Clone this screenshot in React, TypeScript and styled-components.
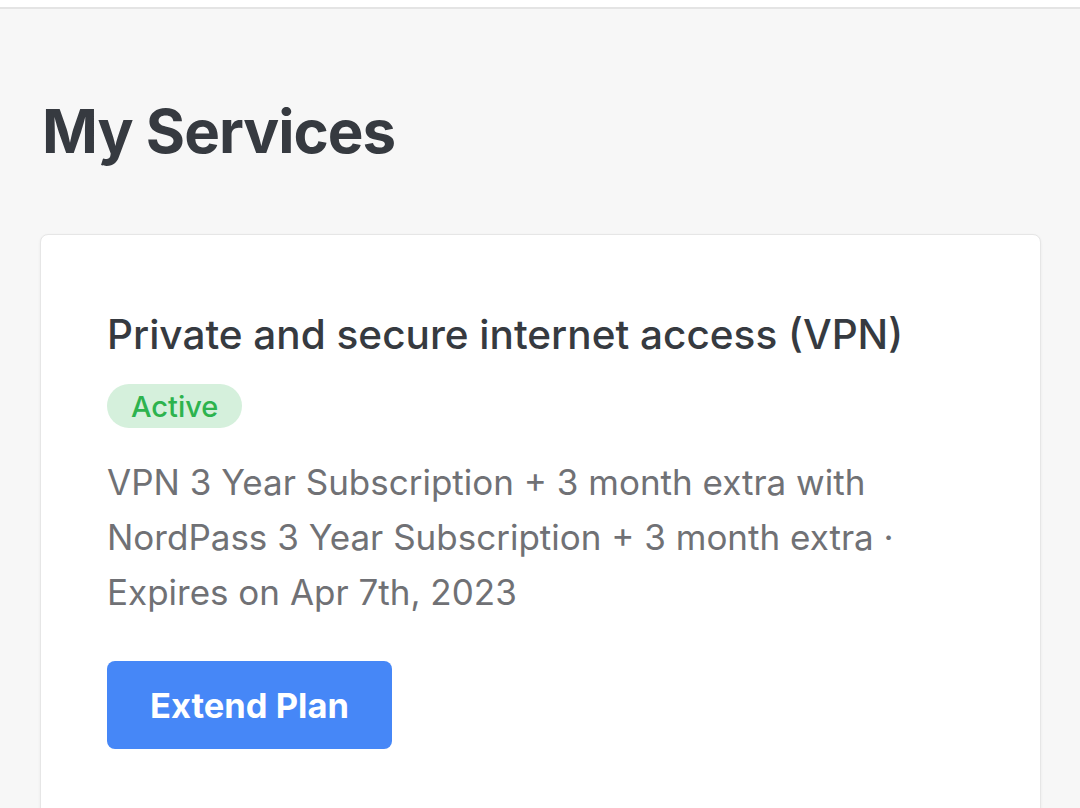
import React from 'react'
import styled, { createGlobalStyle } from 'styled-components';

const GlobalStyle = createGlobalStyle`
    html, body {
        margin: 0;
        padding: 0;
        background: #f7f7f7;
        font-family: Inter, "Noto Sans", "Liberation Sans", sans-serif;
    }
    #root {
        min-height: 100vh;
        overflow: hidden;
    }
`;

const App = () => {
    return (
        <>
            <GlobalStyle />
            <TopBar />
            <Main>
                <PageTitle>My Services</PageTitle>
                <ServiceCard>
                    <ServiceName>Private and secure internet access (VPN)</ServiceName>
                    <StatusBadge>Active</StatusBadge>
                    <PlanDetails>
                        VPN 3 Year Subscription + 3 month extra with NordPass 3 Year Subscription + 3 month extra · Expires on Apr 7th, 2023
                    </PlanDetails>
                    <ExtendButton>Extend Plan</ExtendButton>
                </ServiceCard>
            </Main>
        </>
    )
}

export default App;

const TopBar = styled.div`
    height: 7px;
    background: #ffffff;
    border-bottom: 2px solid #e4e4e4;
`;

const Main = styled.main`
    padding: 0 39px 0 40px;
`;

const PageTitle = styled.h1`
    margin: 0 0 67px;
    padding: 86px 0 0 2px;
    font-size: 60px;
    font-weight: 700;
    line-height: 72px;
    letter-spacing: -1px;
    color: #363a40;
`;

const ServiceCard = styled.section`
    background: #ffffff;
    border: 1px solid #e6e6e6;
    border-radius: 8px;
    box-shadow: 0 1px 3px rgba(0, 0, 0, 0.06);
    padding: 74px 66px 80px;
    height: 700px;
    box-sizing: border-box;
`;

const ServiceName = styled.h2`
    margin: 0;
    font-size: 40.5px;
    font-weight: 500;
    line-height: 52px;
    color: #363a40;
`;

const StatusBadge = styled.span`
    display: inline-flex;
    align-items: center;
    margin-top: 23px;
    height: 44px;
    padding: 0 24px;
    border-radius: 22px;
    background: #d5f0dc;
    color: #2db34e;
    font-size: 29px;
    font-weight: 500;
`;

const PlanDetails = styled.p`
    margin: 27px 0 0;
    max-width: 800px;
    font-size: 35px;
    line-height: 55px;
    color: #707175;
`;

const ExtendButton = styled.button`
    display: block;
    margin-top: 41px;
    width: 285px;
    height: 88px;
    border: none;
    border-radius: 8px;
    background: #4687f7;
    color: #ffffff;
    font-family: inherit;
    font-size: 34.5px;
    font-weight: 700;
    cursor: pointer;
`;
